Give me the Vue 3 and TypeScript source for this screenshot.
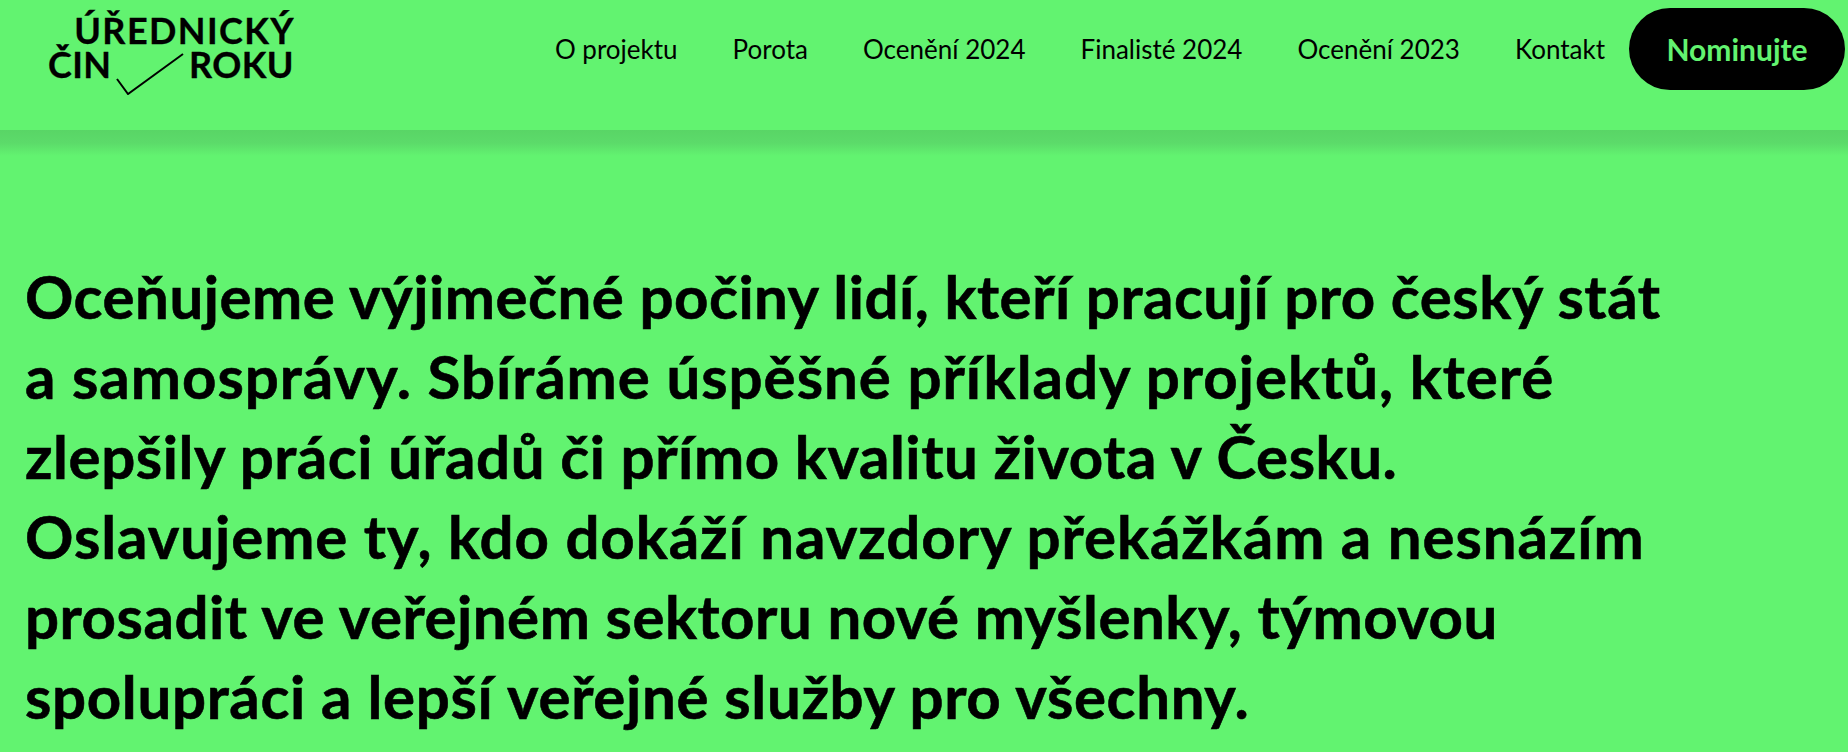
<script setup lang="ts">
interface Line { text: string; spacing: number }
const links: string[] = ['O projektu', 'Porota', 'Ocenění 2024', 'Finalisté 2024', 'Ocenění 2023', 'Kontakt']
const lines: Line[] = [
  { text: 'Oceňujeme výjimečné počiny lidí, kteří pracují pro český stát', spacing: 0.5 },
  { text: 'a samosprávy. Sbíráme úspěšné příklady projektů, které', spacing: 0.98 },
  { text: 'zlepšily práci úřadů či přímo kvalitu života v Česku.', spacing: 0.54 },
  { text: 'Oslavujeme ty, kdo dokáží navzdory překážkám a nesnázím', spacing: 0.92 },
  { text: 'prosadit ve veřejném sektoru nové myšlenky, týmovou', spacing: 0.51 },
  { text: 'spolupráci a lepší veřejné služby pro všechny.', spacing: 0.65 },
]
</script>

<template>
  <div class="page">
    <header class="header">
      <a class="logo" href="#">
        <span class="logo-top">ÚŘEDNICKÝ</span>
        <span class="logo-bottom">
          <span>ČIN</span>
          <svg class="check" width="68" height="42" viewBox="0 0 68 42" fill="none">
            <path d="M1 26 L12 41 L67 1" stroke="#000" stroke-width="2" />
          </svg>
          <span>ROKU</span>
        </span>
      </a>
      <nav class="nav">
        <div class="links">
          <a v-for="l in links" :key="l" href="#" class="link">{{ l }}</a>
        </div>
        <a href="#" class="cta">Nominujte</a>
      </nav>
    </header>
    <div class="shade"></div>
    <main class="main">
      <h1 class="lead">
        <span
          v-for="l in lines"
          :key="l.text"
          class="line"
          :style="{ letterSpacing: l.spacing + 'px' }"
        >{{ l.text }}</span>
      </h1>
    </main>
  </div>
</template>

<style>
html, body { margin: 0; background: #62f370; overflow: hidden; }
</style>

<style scoped>
.page {
  height: 752px;
  background: #62f370;
  color: #000;
  font-family: "Lato", "Noto Sans", sans-serif;
  overflow: hidden;
}
.header {
  height: 130px;
  display: flex;
  align-items: flex-start;
  justify-content: space-between;
  padding: 0 3px 0 48px;
  box-sizing: border-box;
}
.logo {
  display: flex;
  flex-direction: column;
  align-items: flex-end;
  width: 246px;
  color: #000;
  text-decoration: none;
  font-weight: 700;
  font-size: 36px;
  line-height: 34px;
  margin-top: 13px;
  -webkit-text-stroke: 0.3px #000;
}
.logo-top { letter-spacing: 1.4px; margin-right: -1px; }
.logo-bottom {
  display: flex;
  width: 100%;
  justify-content: space-between;
  position: relative;
  letter-spacing: 0.4px;
}
.check { position: absolute; left: 68px; top: 6px; }
.nav {
  display: flex;
  align-items: flex-start;
  gap: 24px;
  margin-top: 8px;
}
.links { display: flex; gap: 55px; }
.link {
  color: #000;
  text-decoration: none;
  font-size: 26px;
  line-height: 82px;
  white-space: nowrap;
}
.cta {
  width: 216px;
  height: 82px;
  border-radius: 41px;
  background: #000;
  color: #62f370;
  font-weight: 700;
  font-size: 30px;
  display: flex;
  align-items: center;
  justify-content: center;
  text-decoration: none;
}
.shade {
  height: 26px;
  background: linear-gradient(#59d566 0, #5cdb6a 50%, #62f370 100%);
}
.main { padding: 100px 0 0 25px; }
.lead {
  margin: 0;
  font-size: 60px;
  line-height: 80px;
  font-weight: 700;
  -webkit-text-stroke: 0.6px #000;
}
.line { display: block; white-space: nowrap; }
</style>
